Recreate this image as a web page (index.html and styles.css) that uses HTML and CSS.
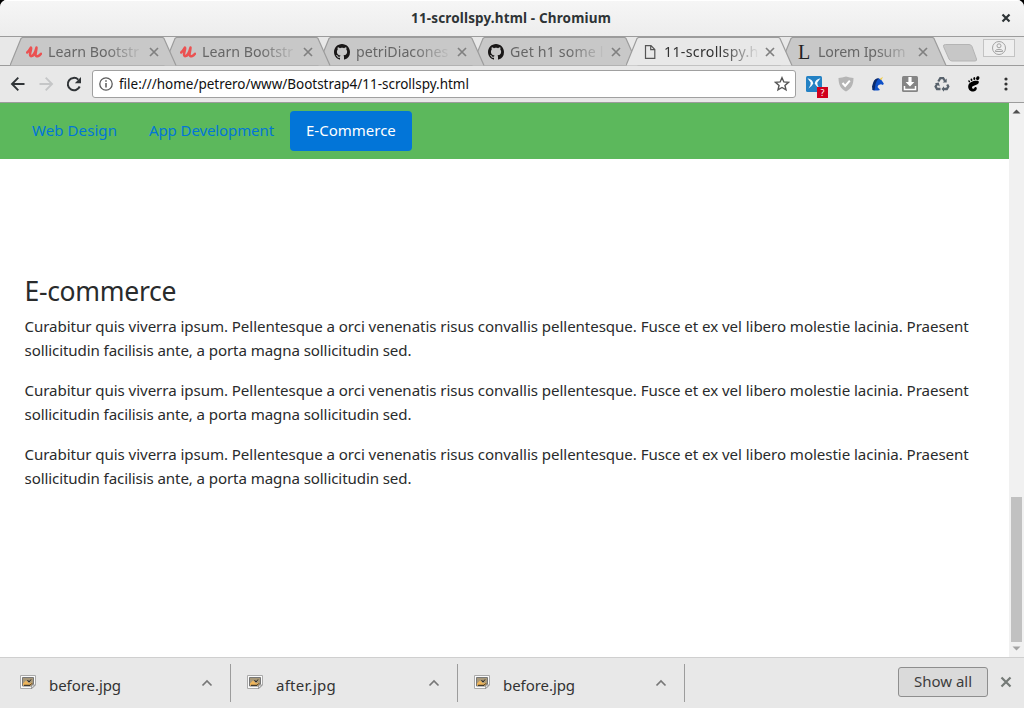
FILE: index.html
```
<!DOCTYPE html>
<html lang="en">
<head>
<meta charset="utf-8">
<title>11-scrollspy.html</title>
<link rel="stylesheet" href="styles.css">
</head>
<body>
<svg class="symbols" width="0" height="0">
  <symbol id="tab-shape" viewBox="0 0 168 29"><path d="M0 28.500L11 1.500Q12 .5 13 .5H152Q153.500 .5 154 1.500L166 28.500"/></symbol>
  <symbol id="udemy" viewBox="0 0 16 16"><path d="M1.200 8.500C3 7 4.500 4 5 3.500C6 4 4 8 4 10.500C4.200 13 6.500 12.500 8 10C9.300 8 10 5.500 10.500 3.500C10.600 6 9.300 9 9.600 11.200C10 13 13 12.500 15 9.800" fill="none" stroke="#eb5252" stroke-width="2.500" stroke-linecap="round" stroke-linejoin="round"/></symbol>
  <symbol id="github" viewBox="0 0 16 16"><path fill="#191717" d="M8 0C3.580 0 0 3.580 0 8c0 3.540 2.290 6.530 5.470 7.590.4.070.55-.17.55-.38 0-.19-.01-.82-.01-1.490-2.010.37-2.530-.49-2.690-.94-.09-.23-.48-.94-.82-1.130-.28-.15-.68-.52-.01-.53.630-.01 1.080.58 1.230.82.720 1.210 1.870.870 2.330.660.070-.52.280-.87.510-1.070-1.780-.2-3.640-.89-3.640-3.950 0-.87.310-1.590.820-2.150-.08-.2-.36-1.020.080-2.120 0 0 .67-.21 2.200.820.640-.18 1.320-.27 2-.27s1.360.090 2 .27c1.530-1.040 2.200-.82 2.200-.82.440 1.100.160 1.920.080 2.120.510.560.820 1.270.820 2.150 0 3.070-1.870 3.750-3.650 3.950.290.250.540.730.540 1.480 0 1.070-.01 1.930-.01 2.200 0 .210.150.460.550.380A8.010 8.010 0 0 0 16 8c0-4.420-3.580-8-8-8z"/></symbol>
  <symbol id="cross" viewBox="0 0 10 10"><path d="M1 1l8 8M9 1l-8 8"/></symbol>
  <symbol id="picture" viewBox="0 0 16 14"><path d="M.5 .5h15v9l-3.500 4H.5z" fill="#fafafa" stroke="#aaa"/><path d="M2.500 2.500h11v6.500l-2 2h-9z" fill="#a89878" stroke="#777"/><path d="M3 8.500L6 5.500l3 3 3-1v3H3z" fill="#efb65c"/><path d="M7.500 5l1.500 2 2-2.500M4 10.300h6l2-2" fill="none" stroke="#222"/><path d="M11.500 13.500V10h4z" fill="#ddd" stroke="#777" stroke-width=".6"/></symbol>
  <symbol id="chevron" viewBox="0 0 12 8"><path d="M1.500 6.500L6 2l4.500 4.500" fill="none" stroke="#777" stroke-width="1.700"/></symbol>
</svg>
<div class="window">
  <header class="titlebar">
    <span class="window-title">11-scrollspy.html - Chromium</span>
    <svg class="window-close" width="10" height="10" viewBox="0 0 10 10"><path d="M1.500 1.500l7 7M8.500 1.500l-7 7" stroke="#2e3436" stroke-width="2.200"/></svg>
  </header>

  <nav class="tabstrip">
    <div class="tab t1">
      <svg class="tab-shape" width="168" height="29"><use href="#tab-shape"/></svg>
      <svg width="16" height="16"><use href="#udemy"/></svg>
      <span class="tab-label">Learn Bootstr</span>
      <svg class="tab-close" width="10" height="10"><use href="#cross"/></svg>
    </div>
    <div class="tab t2">
      <svg class="tab-shape" width="168" height="29"><use href="#tab-shape"/></svg>
      <svg width="16" height="16"><use href="#udemy"/></svg>
      <span class="tab-label">Learn Bootstr</span>
      <svg class="tab-close" width="10" height="10"><use href="#cross"/></svg>
    </div>
    <div class="tab t3">
      <svg class="tab-shape" width="168" height="29"><use href="#tab-shape"/></svg>
      <svg width="16" height="16"><use href="#github"/></svg>
      <span class="tab-label">petriDiacones</span>
      <svg class="tab-close" width="10" height="10"><use href="#cross"/></svg>
    </div>
    <div class="tab t4">
      <svg class="tab-shape" width="168" height="29"><use href="#tab-shape"/></svg>
      <svg width="16" height="16"><use href="#github"/></svg>
      <span class="tab-label">Get h1 some l</span>
      <svg class="tab-close" width="10" height="10"><use href="#cross"/></svg>
    </div>
    <div class="tab active">
      <svg class="tab-shape" width="168" height="29"><use href="#tab-shape"/></svg>
      <svg width="16" height="16" viewBox="0 0 16 16"><path d="M3.500 1.700h5.500l3.800 3.800v8.800H3.500zM8.700 1.700v4h4" fill="none" stroke="#555" stroke-width="1.200"/></svg>
      <span class="tab-label">11-scrollspy.h</span>
      <svg class="tab-close" width="10" height="10"><use href="#cross"/></svg>
    </div>
    <div class="tab t6">
      <svg class="tab-shape" width="168" height="29"><use href="#tab-shape"/></svg>
      <span class="letter">L</span>
      <span class="tab-label">Lorem Ipsum</span>
      <svg class="tab-close" width="10" height="10"><use href="#cross"/></svg>
    </div>
    <svg class="new-tab" width="36" height="20" viewBox="0 0 36 20"><path d="M3.500 1.500H27Q29 1.500 30 3.500L34.500 16Q35 18 33 18H10Q8 18 7 16L1.500 3.500Q1 1.500 3.500 1.500z" fill="#c7c7c7" stroke="#b4b4b4"/></svg>
    <div class="profile"><svg width="16" height="16" viewBox="0 0 16 16" fill="none" stroke="#a3a3a3"><circle cx="8" cy="8" r="6.500"/><circle cx="8" cy="5.800" r="2"/><path d="M4.500 11.500V10.500Q5 9.500 8 9.500T11.500 10.500V11.500z"/></svg></div>
  </nav>

  <div class="toolbar">
    <svg class="back" width="16" height="16" viewBox="0 0 16 16"><path d="M14.500 8H2.500M8.300 1.700L2 8l6.300 6.300" fill="none" stroke="#303437" stroke-width="1.900"/></svg>
    <svg class="forward" width="16" height="16" viewBox="0 0 16 16"><path d="M1.500 8h12M7.700 1.700L14 8l-6.300 6.300" fill="none" stroke="#c5c6c7" stroke-width="1.900"/></svg>
    <svg class="reload" width="16" height="16" viewBox="0 0 16 16"><path d="M13.700 10.500A6.200 6.200 0 1 1 12.300 3.600" fill="none" stroke="#303437" stroke-width="2"/><path d="M15 1v6.200H8.800z" fill="#303437"/></svg>
    <div class="omnibox">
      <svg width="14" height="14" viewBox="0 0 14 14"><circle cx="7" cy="7" r="6.200" fill="none" stroke="#5a5a5a" stroke-width="1.300"/><path d="M7 6v4.500M7 3.300v1.500" stroke="#5a5a5a" stroke-width="1.500"/></svg>
      <span class="url">file:///home/petrero/www/Bootstrap4/11-scrollspy.html</span>
      <svg width="16" height="16" viewBox="0 0 16 16"><path d="M8 1.700l1.850 4.250 4.600.4-3.500 3.050 1.050 4.500L8 11.500l-4 2.400 1.050-4.500-3.500-3.050 4.600-.4z" fill="none" stroke="#555" stroke-width="1.400"/></svg>
    </div>
    <div class="extensions">
      <div class="ext-badged">
        <svg width="16" height="16" viewBox="0 0 16 16"><rect width="16" height="16" rx="1.500" fill="#2381c4"/><path d="M1.500 2.200Q6.500 3 7.300 7.500Q6.500 9.500 2.500 12.500Q5.200 9 4.700 6.500zM14.500 2.200Q9.500 3 8.700 7.500Q9.500 9.500 13.500 12.500Q10.800 9 11.300 6.500z" fill="#f3f8fc"/></svg>
        <span class="badge">?</span>
      </div>
      <svg width="16" height="16" viewBox="0 0 16 16"><path d="M8 .5Q12 1.500 15.500 2C15.500 9 13 13 8 15.500C3 13 .5 9 .5 2Q4 1.500 8 .5z" fill="#b5b5b5"/><path d="M4.500 7l2.700 3L11.800 4.600" fill="none" stroke="#fff" stroke-width="2"/></svg>
      <svg width="16" height="16" viewBox="0 0 16 16"><path d="M2.500 14Q2.800 11.500 4 10L4 6Q5.500 2.500 9 2.500L11 3.500L13.800 7.500L13 9L11 8.300L8.500 9L7.500 11L10 14Q6 15 2.500 14z" fill="#0d50c8"/><path d="M2.500 14L2 10.500L3.200 6.500Q5 2 9 2.300L7 4.500L5.500 8L4.500 14.300z" fill="#0a2a6c"/><path d="M9.500 3L13 .7 11.500 4z" fill="#f2ce4a"/></svg>
      <svg width="16" height="16" viewBox="0 0 16 16"><rect width="16" height="16" rx="1.500" fill="#858585"/><path d="M6.400 1h3.200v5h2.800L8 10.500 3.600 6h2.800z" fill="#fff"/><path d="M2.500 10v3.500h11V10" fill="none" stroke="#fff" stroke-width="1.500"/></svg>
      <svg width="16" height="16" viewBox="0 0 16 16" fill="none" stroke="#58626c" stroke-width="2.300"><path d="M4.300 5.500L6.300 2.200H9.200L11 5"/><path d="M13.200 8.500L14.300 10.500 12.800 13H9"/><path d="M6.500 13H3L1.600 10.500 3.200 8"/><path d="M12.700 2.500v4h-4zM10 10.200v5.500L7.500 13zM.8 7.300l4-.8 1 4z" fill="#58626c" stroke="none"/></svg>
      <svg width="16" height="16" viewBox="0 0 16 16" fill="#000"><path d="M12.300 5C9 4 3 5.700 2.300 9.500C1.600 13 4 15.800 7.500 15.500C10 15.200 11.400 13.300 10.600 11.600C10.100 10.500 8.500 11 8.300 12.100C8 13.300 6.200 12.900 6 11.500C5.700 9.300 12.300 9.600 12.800 6.500Q13 5.200 12.300 5z"/><ellipse cx="11.800" cy="2.200" rx="1.600" ry="2" transform="rotate(20 11.800 2)"/><ellipse cx="8.300" cy="2.600" rx="1" ry="1.500"/><ellipse cx="5.500" cy="3.700" rx=".9" ry="1.300" transform="rotate(-15 5.500 3.700)"/><ellipse cx="3.300" cy="5.300" rx=".8" ry="1.200" transform="rotate(-30 3.300 5.500)"/></svg>
    </div>
    <svg class="menu" width="4" height="14" viewBox="0 0 4 14" fill="#333"><circle cx="2" cy="2" r="1.600"/><circle cx="2" cy="7" r="1.600"/><circle cx="2" cy="12" r="1.600"/></svg>
  </div>

  <div class="viewport">
    <main class="page">
      <nav class="navbar">
        <a class="nav-link">Web Design</a>
        <a class="nav-link">App Development</a>
        <a class="nav-link selected">E-Commerce</a>
      </nav>
      <section class="content">
        <h3>E-commerce</h3>
        <p>Curabitur quis viverra ipsum. Pellentesque a orci venenatis risus convallis pellentesque. Fusce et ex vel libero molestie lacinia. Praesent<br><span class="tail">sollicitudin facilisis ante, a porta magna sollicitudin sed.</span></p>
        <p>Curabitur quis viverra ipsum. Pellentesque a orci venenatis risus convallis pellentesque. Fusce et ex vel libero molestie lacinia. Praesent<br><span class="tail">sollicitudin facilisis ante, a porta magna sollicitudin sed.</span></p>
        <p>Curabitur quis viverra ipsum. Pellentesque a orci venenatis risus convallis pellentesque. Fusce et ex vel libero molestie lacinia. Praesent<br><span class="tail">sollicitudin facilisis ante, a porta magna sollicitudin sed.</span></p>
      </section>
    </main>
    <div class="scrollbar">
      <svg width="9" height="5" viewBox="0 0 9 5"><path d="M.5 4.500L4.500 .5l4 4z" fill="#505050"/></svg>
      <div class="thumb"></div>
      <svg width="9" height="5" viewBox="0 0 9 5"><path d="M.5 .5L4.500 4.500l4-4z" fill="#a3a3a3"/></svg>
    </div>
  </div>

  <footer class="downloads">
    <div class="download">
      <svg class="thumbnail" width="16" height="14"><use href="#picture"/></svg>
      <span class="file">before.jpg</span>
      <svg width="12" height="8"><use href="#chevron"/></svg>
    </div>
    <div class="download">
      <svg class="thumbnail" width="16" height="14"><use href="#picture"/></svg>
      <span class="file wide">after.jpg</span>
      <svg width="12" height="8"><use href="#chevron"/></svg>
    </div>
    <div class="download">
      <svg class="thumbnail" width="16" height="14"><use href="#picture"/></svg>
      <span class="file">before.jpg</span>
      <svg width="12" height="8"><use href="#chevron"/></svg>
    </div>
    <button class="show-all">Show all</button>
    <svg class="shelf-close" width="12" height="12" viewBox="0 0 12 12"><path d="M1.500 1.500l9 9M10.500 1.500l-9 9" stroke="#757a77" stroke-width="2.200"/></svg>
  </footer>
</div>
</body>
</html>
```
FILE: styles.css
```
* { box-sizing: border-box; }
body { margin: 0; background: #000; font-family: "Noto Sans", "Open Sans", sans-serif; color: #292b2c; }
svg { display: block; flex: none; }
.symbols { position: absolute; }
.window { width: 1024px; height: 708px; display: flex; flex-direction: column; overflow: hidden; border-radius: 7px 7px 0 0; background: #e8e8e8; }
.titlebar { position: relative; flex: none; height: 36px; padding-right: 2px; display: flex; align-items: center; justify-content: center; background: linear-gradient(#f6f6f6, #ededed); box-shadow: inset 0 1px #fff; font-size: 13.500px; letter-spacing: .15px; font-weight: 700; color: #2e3436; }
.window-close { position: absolute; right: 13px; top: 13px; }
.tabstrip { flex: none; height: 30px; display: flex; align-items: flex-start; padding-left: 10px; border-top: 1px solid #9c9c9c; background: linear-gradient(#9c9c9c, #9c9c9c) 0 28px / 100% 1px no-repeat, #e8e8e8; }
.tab { position: relative; flex: none; width: 166px; height: 29px; margin-right: -12px; padding-left: 16px; display: flex; align-items: center; font-size: 14.200px; color: #666; }
.tab-shape { position: absolute; left: 0; top: 0; z-index: -1; fill: #c8c8c8; stroke: #9c9c9c; stroke-width: 1.200; }
.t1 { z-index: 5; } .t2 { z-index: 4; } .t3 { z-index: 3; } .t4 { z-index: 2; } .t6 { z-index: 1; }
.active { z-index: 6; color: #333; }
.active .tab-shape { fill: #e8e8e8; }
.tab-label { width: 96px; margin-left: 6px; white-space: nowrap; mask-image: linear-gradient(90deg, #000 60%, transparent 100%); }
.t4 .tab-label { letter-spacing: .15px; }
.active .tab-label { letter-spacing: .3px; }
.t6 .tab-label { letter-spacing: -.15px; }
.tab-close { margin-left: 5px; stroke: #808080; stroke-width: 1.700; }
.t6 .tab-close { margin-left: 4px; }
.letter { width: 16px; text-align: center; font: 20px/20px "Liberation Serif", serif; color: #222; }
.new-tab { margin: 6px 0 0 8px; }
.profile { width: 32px; height: 18px; margin: 2px 0 0 5px; display: grid; place-items: center; border: 1px solid #c3c3c3; background: #efefef; }
.toolbar { flex: none; height: 37px; display: flex; align-items: center; padding: 0 14px 0 10px; border-bottom: 1px solid #9c9c9c; background: #e8e8e8; }
.forward { margin-left: 12px; }
.reload { margin-left: 12px; }
.omnibox { width: 704px; height: 28px; margin-left: 10px; padding: 0 5px 0 6px; display: flex; align-items: center; border: 1px solid #a0a0a0; border-radius: 3px; background: #fff; }
.url { flex: 1; margin-left: 6px; font-size: 13.500px; letter-spacing: -.02px; color: #111; white-space: nowrap; }
.extensions { display: flex; gap: 16px; margin-left: 10px; }
.ext-badged { position: relative; }
.badge { position: absolute; left: 11px; top: 11px; width: 11px; height: 11px; background: #d1001c; color: #fff; font: 9px/11px "Noto Sans", sans-serif; text-align: center; }
.menu { margin-left: 22px; }
.viewport { flex: none; height: 554px; display: flex; background: #fff; }
.page { flex: 1; min-width: 0; }
.navbar { height: 56px; padding: 8px 16px; display: flex; background: #5cb85c; }
.nav-link { height: 40px; padding: 0 16px; line-height: 38px; border-radius: 4px; font-size: 15px; color: #0275d8; white-space: nowrap; }
.nav-link:nth-child(2) { width: 157px; letter-spacing: -.1px; }
.nav-link:first-child { width: 117px; letter-spacing: .08px; }
.selected { width: 122px; background: #0275d8; color: #fff; }
.content { padding: 117px 24.500px 0; font-size: 15.100px; letter-spacing: -.062px; line-height: 24px; white-space: nowrap; }
.tail { letter-spacing: -.1px; }
h3 { margin: 0 0 7px; font-size: 26.500px; letter-spacing: -.3px; font-weight: 400; line-height: 31px; }
p { margin: 0 0 16px; }
.scrollbar { flex: none; width: 15px; display: flex; flex-direction: column; align-items: center; justify-content: space-between; padding: 6px 0; background: #f1f1f1; }
.thumb { width: 11px; height: 145px; margin-top: auto; margin-bottom: 4px; background: #c1c1c1; }
.downloads { flex: none; height: 51px; display: flex; align-items: center; border-top: 1px solid #cfcfcf; background: #e8e8e8; }
.download { flex: none; width: 227px; height: 38px; padding: 0 17px 0 16px; display: flex; align-items: center; border-right: 1px solid #9c9c9c; }
.download:first-child { width: 231px; padding-left: 20px; }
.thumbnail { margin-bottom: 2px; }
.file { flex: 1; margin-left: 13px; padding-top: 4px; font-size: 15px; letter-spacing: -.06px; color: #333; }
.wide { letter-spacing: .27px; }
.show-all { width: 90px; height: 30px; margin: 0 0 3px auto; padding: 0 0 2px; border: 1px solid #8e8e8e; border-radius: 3px; background: #dadada; font: 15px "Noto Sans", sans-serif; color: #3d3d3d; }
.shelf-close { margin: 0 12px 3px; }
```
